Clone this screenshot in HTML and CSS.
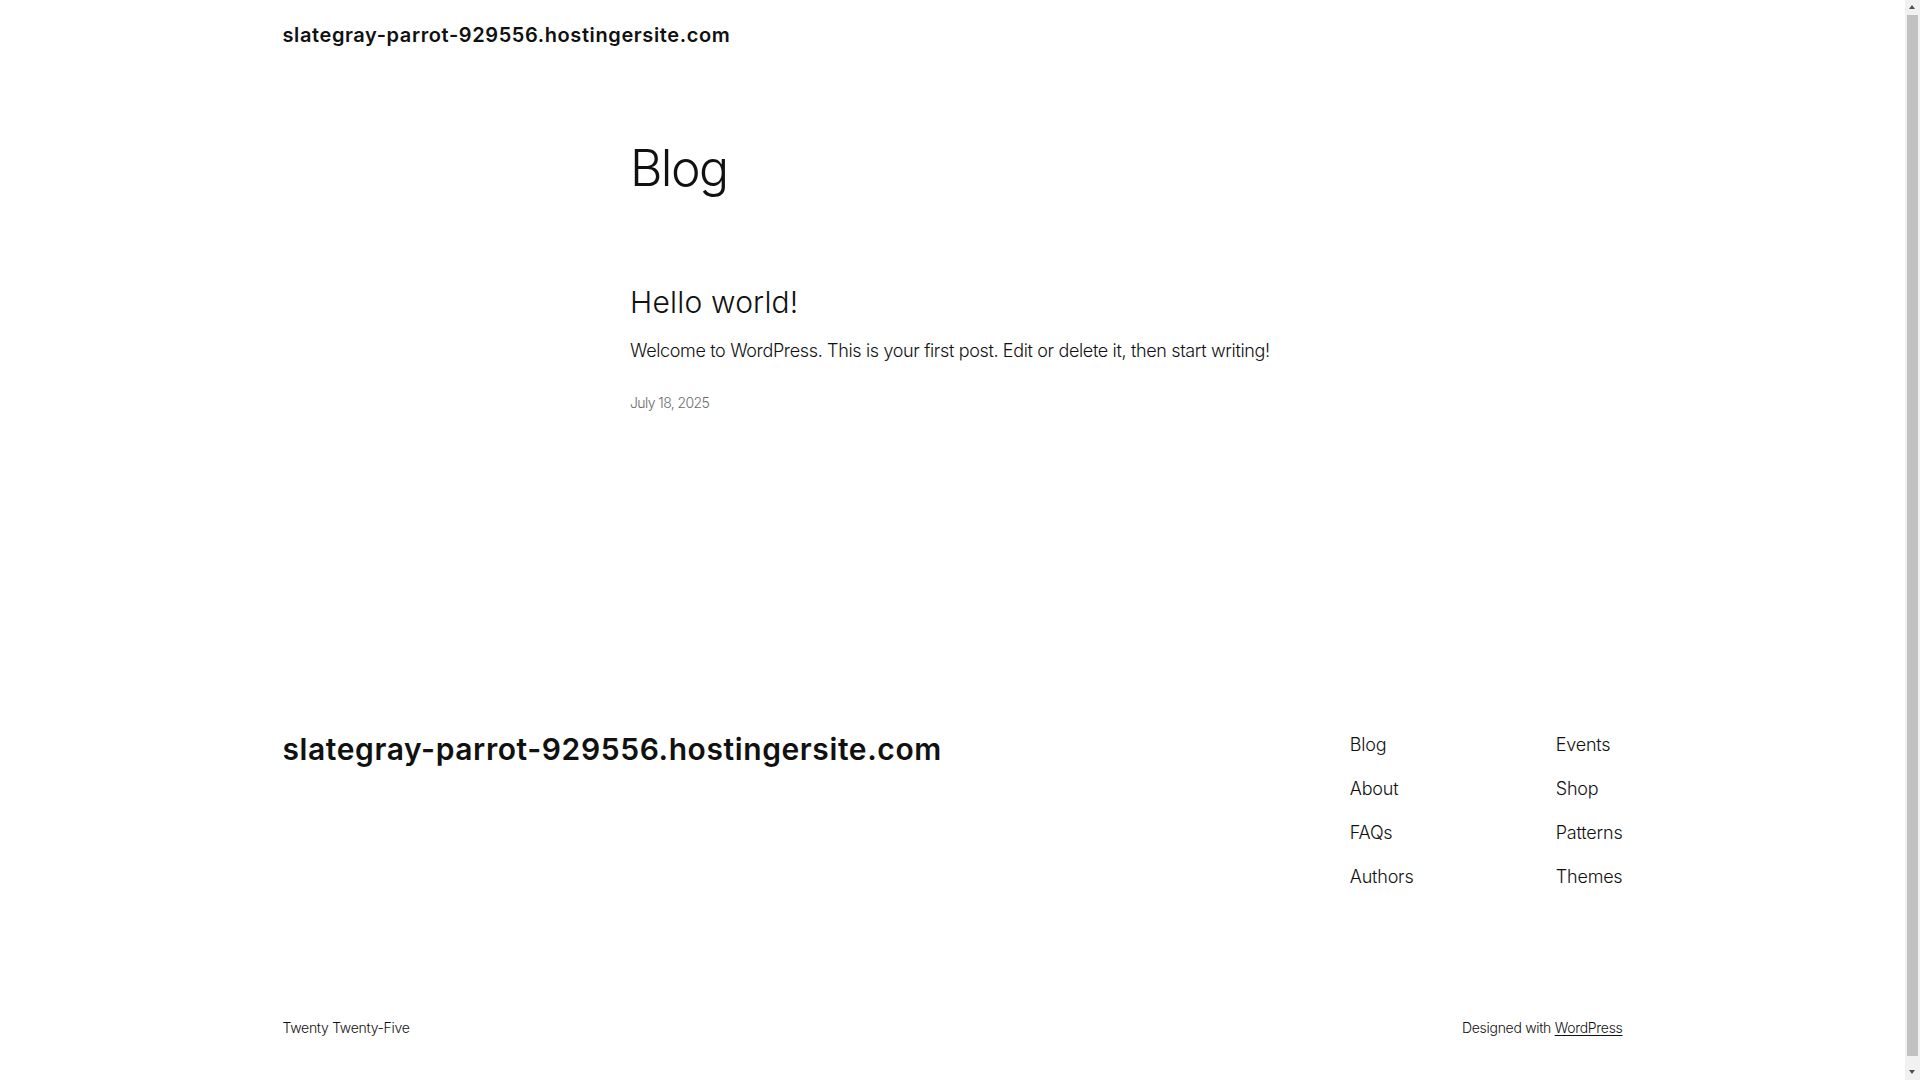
FILE: index.html
```html
<!DOCTYPE html>
<html lang="en">
<head>
<meta charset="utf-8">
<title>Blog – slategray-parrot-929556.hostingersite.com</title>
<link rel="stylesheet" href="styles.css">
</head>
<body>
<header class="site-header">
  <div class="wide">
    <a class="site-title" href="#">slategray-parrot-929556.hostingersite.com</a>
  </div>
</header>
<main class="site-main">
  <div class="content">
    <h1 class="page-title">Blog</h1>
    <article class="post">
      <h2 class="post-title"><a href="#">Hello world!</a></h2>
      <p class="post-excerpt">Welcome to WordPress. This is your first post. Edit or delete it, then start writing!</p>
      <div class="post-date">July 18, 2025</div>
    </article>
  </div>
</main>
<footer class="site-footer">
  <div class="wide">
    <div class="footer-top">
      <a class="footer-title" href="#">slategray-parrot-929556.hostingersite.com</a>
      <div class="footer-navs">
        <nav class="footer-nav first">
          <a href="#">Blog</a>
          <a href="#">About</a>
          <a href="#">FAQs</a>
          <a href="#">Authors</a>
        </nav>
        <nav class="footer-nav">
          <a href="#">Events</a>
          <a href="#">Shop</a>
          <a href="#">Patterns</a>
          <a href="#">Themes</a>
        </nav>
      </div>
    </div>
    <div class="footer-bottom">
      <span class="credit">Twenty Twenty-Five</span>
      <span class="credit">Designed with <a href="#" class="underline">WordPress</a></span>
    </div>
  </div>
</footer>
<div class="scrollbar" aria-hidden="true">
  <span class="arrow up"></span>
  <span class="thumb"></span>
  <span class="arrow down"></span>
</div>
</body>
</html>
```

FILE: styles.css
```css
html, body {
  margin: 0;
  padding: 0;
  background: #ffffff;
}
body {
  font-family: Inter, "Liberation Sans", sans-serif;
  font-weight: 300;
  color: #111111;
  letter-spacing: -0.1px;
  padding-right: 15px;
}
a {
  color: inherit;
  text-decoration: none;
}
.wide {
  width: 1340px;
  margin: 0 auto;
}
.content {
  width: 645px;
  margin: 0 auto;
}
.site-header {
  padding: 17px 0 15px;
}
.site-title {
  display: block;
  font-size: 20px;
  line-height: 36px;
  font-weight: 600;
  letter-spacing: 0.6px;
}
.site-main {
  padding-top: 69px;
}
.page-title {
  margin: 0;
  font-size: 50px;
  line-height: 62px;
  font-weight: 300;
  letter-spacing: -1.6px;
}
.post {
  padding-top: 85px;
}
.post-title {
  margin: 0;
  font-size: 30px;
  line-height: 36px;
  font-weight: 300;
  letter-spacing: 0.2px;
}
.post-excerpt {
  margin: 16px 0 0;
  font-size: 18px;
  line-height: 29px;
  letter-spacing: -0.35px;
}
.post-date {
  margin-top: 28px;
  font-size: 14px;
  line-height: 20px;
  color: #6b6b6b;
  letter-spacing: -0.6px;
}
.site-footer {
  padding-top: 318px;
  padding-bottom: 50px;
}
.footer-top {
  display: flex;
  justify-content: space-between;
  align-items: flex-start;
}
.footer-title {
  display: block;
  font-size: 30px;
  line-height: 36px;
  font-weight: 600;
  letter-spacing: 0.6px;
}
.footer-navs {
  display: flex;
}
.footer-nav {
  display: flex;
  flex-direction: column;
  gap: 17px;
  font-size: 18px;
  line-height: 27px;
  letter-spacing: -0.2px;
}
.footer-nav.first {
  width: 206px;
}
.footer-bottom {
  display: flex;
  justify-content: space-between;
  margin-top: 128px;
  font-size: 14px;
  line-height: 20px;
  letter-spacing: -0.3px;
}
.underline {
  text-decoration: underline;
  text-underline-offset: 2px;
}
.scrollbar {
  position: fixed;
  top: 0;
  right: 0;
  width: 15px;
  height: 100vh;
  background: #f1f1f1;
}
.thumb {
  position: absolute;
  top: 15px;
  bottom: 24px;
  left: 2px;
  width: 11px;
  background: #c1c1c1;
}
.arrow {
  position: absolute;
  left: 4px;
  width: 0;
  height: 0;
  border-left: 3.5px solid transparent;
  border-right: 3.5px solid transparent;
}
.arrow.up {
  top: 5px;
  border-bottom: 4px solid #505050;
}
.arrow.down {
  bottom: 6px;
  border-top: 4px solid #505050;
}
```
